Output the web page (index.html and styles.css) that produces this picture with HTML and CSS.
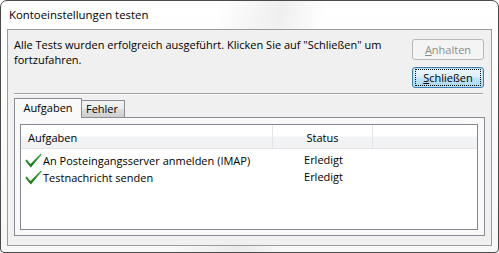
FILE: index.html
```html
<!DOCTYPE html>
<html lang="de">
<head>
<meta charset="utf-8">
<title>Kontoeinstellungen testen</title>
<link rel="stylesheet" href="styles.css">
</head>
<body>
<div class="window">
  <div class="titlebar">Kontoeinstellungen testen</div>
  <div class="client">
    <div class="top">
      <p class="msg">Alle Tests wurden erfolgreich ausgeführt. Klicken Sie auf "Schließen" um<br>fortzufahren.</p>
      <div class="buttons">
        <button class="btn btn-disabled" disabled><u>A</u>nhalten</button>
        <button class="btn btn-default"><span class="focus"><u>S</u>chließen</span></button>
      </div>
    </div>
    <div class="separator"></div>
    <div class="tabs">
      <div class="tab tab-active">Aufgaben</div>
      <div class="tab">Fehler</div>
    </div>
    <div class="panel">
      <div class="list">
        <div class="list-head">
          <div class="col col-task">Aufgaben</div>
          <div class="col col-status">Status</div>
          <div class="col col-rest"></div>
        </div>
        <div class="rows">
          <div class="row">
            <div class="col col-task">
              <svg class="check" width="17" height="16" viewBox="0 0 17 16"><defs><linearGradient id="g1" x1="0" y1="0" x2="0" y2="1"><stop offset="0" stop-color="#3fae3f"/><stop offset="1" stop-color="#16701a"/></linearGradient></defs><path d="M0.2 7.8 L1.7 6.6 L5.5 11 L15.9 0.5 L16.8 1.5 L5.8 14.4 Z" fill="url(#g1)"/></svg>
              <span>An Posteingangsserver anmelden (IMAP)</span>
            </div>
            <div class="col col-status">Erledigt</div>
          </div>
          <div class="row">
            <div class="col col-task">
              <svg class="check" width="17" height="16" viewBox="0 0 17 16"><defs><linearGradient id="g2" x1="0" y1="0" x2="0" y2="1"><stop offset="0" stop-color="#3fae3f"/><stop offset="1" stop-color="#16701a"/></linearGradient></defs><path d="M0.2 7.8 L1.7 6.6 L5.5 11 L15.9 0.5 L16.8 1.5 L5.8 14.4 Z" fill="url(#g2)"/></svg>
              <span>Testnachricht senden</span>
            </div>
            <div class="col col-status">Erledigt</div>
          </div>
        </div>
      </div>
    </div>
  </div>
</div>
</body>
</html>
```
FILE: styles.css
```css
* { box-sizing: border-box; }
html, body { margin: 0; padding: 0; }
body {
  width: 499px;
  height: 253px;
  font-family: "Open Sans", "Noto Sans", sans-serif;
  font-size: 11px;
  color: #000;
  overflow: hidden;
}
.window {
  width: 499px;
  height: 253px;
  border: 1px solid #4a4a4a;
  border-radius: 7px 7px 4px 4px;
  background:
    linear-gradient(100deg, rgba(255,255,255,0) 40%, rgba(220,220,220,0.45) 52%, rgba(255,255,255,0) 60%),
    linear-gradient(180deg, #ffffff 0%, #f7f7f7 100%);
  display: flex;
  flex-direction: column;
}
.titlebar {
  height: 28px;
  padding: 6px 0 0 8px;
  line-height: 16px;
  font-size: 11.4px;
  color: #000;
}
.client {
  flex: 1;
  margin: 0 6px 6px 6px;
  border: 1px solid #9b9b9b;
  background: #f0f0f0;
  padding: 0 6px 9px 6px;
  display: flex;
  flex-direction: column;
}
.top {
  display: flex;
  justify-content: space-between;
  align-items: flex-start;
  height: 58px;
}
.msg {
  margin: 7px 0 0 0;
  line-height: 15px;
}
.buttons {
  margin: 9px 1px 0 0;
  display: flex;
  flex-direction: column;
  gap: 7px;
}
.btn {
  width: 72px;
  height: 21px;
  font-family: inherit;
  font-size: 11px;
  border-radius: 3px;
  padding: 0;
  line-height: 17px;
}
.btn-disabled {
  border: 1px solid #b5b9bc;
  background: #f4f4f4;
  color: #8d8d8d;
}
.btn-default {
  border: 1px solid #3c7fb1;
  background: linear-gradient(180deg, #ecf6fd 0%, #dcf0fc 48%, #c1e4f8 52%, #a9d9f2 100%);
  color: #000;
  padding: 1px;
  box-shadow: inset 0 0 0 1px #b7e1fa;
}
.focus {
  display: block;
  height: 17px;
  margin: 0 1px;
  border: 1px dotted #000;
  line-height: 15px;
}
.separator {
  margin: 5px 2px 0 0;
  height: 2px;
  border-top: 1px solid #a0a0a0;
  border-bottom: 1px solid #ffffff;
}
.tabs {
  margin-top: 3px;
  height: 19px;
  display: flex;
  align-items: flex-end;
}
.tab {
  height: 17px;
  width: 43px;
  border: 1px solid #898c95;
  border-left: none;
  border-bottom: none;
  background: linear-gradient(180deg, #f2f2f2 0%, #ebebeb 50%, #dddddd 51%, #cfcfcf 100%);
  text-align: center;
  line-height: 15px;
  padding-right: 2px;
}
.tab-active {
  position: relative;
  z-index: 1;
  width: 68px;
  height: 20px;
  margin-bottom: -1px;
  border-left: 1px solid #898c95;
  background: #f9f9f9;
  line-height: 18px;
  padding-right: 0;
}
.panel {
  flex: 1;
  border: 1px solid #898c95;
  background: #f9f9f9;
  padding: 6px 6px 5px 5px;
  display: flex;
}
.list {
  flex: 1;
  border: 1px solid #828790;
  background: #ffffff;
}
.list-head {
  display: flex;
  height: 24px;
  border-bottom: 1px solid #e5e5e5;
  background: linear-gradient(180deg, #ffffff 0%, #ffffff 45%, #f3f4f6 55%, #f1f2f4 100%);
}
.list-head .col {
  padding-top: 5px;
  line-height: 15px;
  border-right: 1px solid #e2e4e8;
}
.list-head .col-rest { border-right: none; flex: 1; }
.list-head .col-task { padding-left: 7px; }
.col-task { width: 252px; }
.col-status { width: 100px; text-align: center; }
.rows { padding-top: 3px; }
.row {
  display: flex;
  height: 17px;
  line-height: 16px;
}
.row .col-task {
  display: flex;
  align-items: center;
  padding-left: 4px;
}
.row .col-status { padding-left: 1px; }
.check { flex: none; margin-right: 1px; }
```
